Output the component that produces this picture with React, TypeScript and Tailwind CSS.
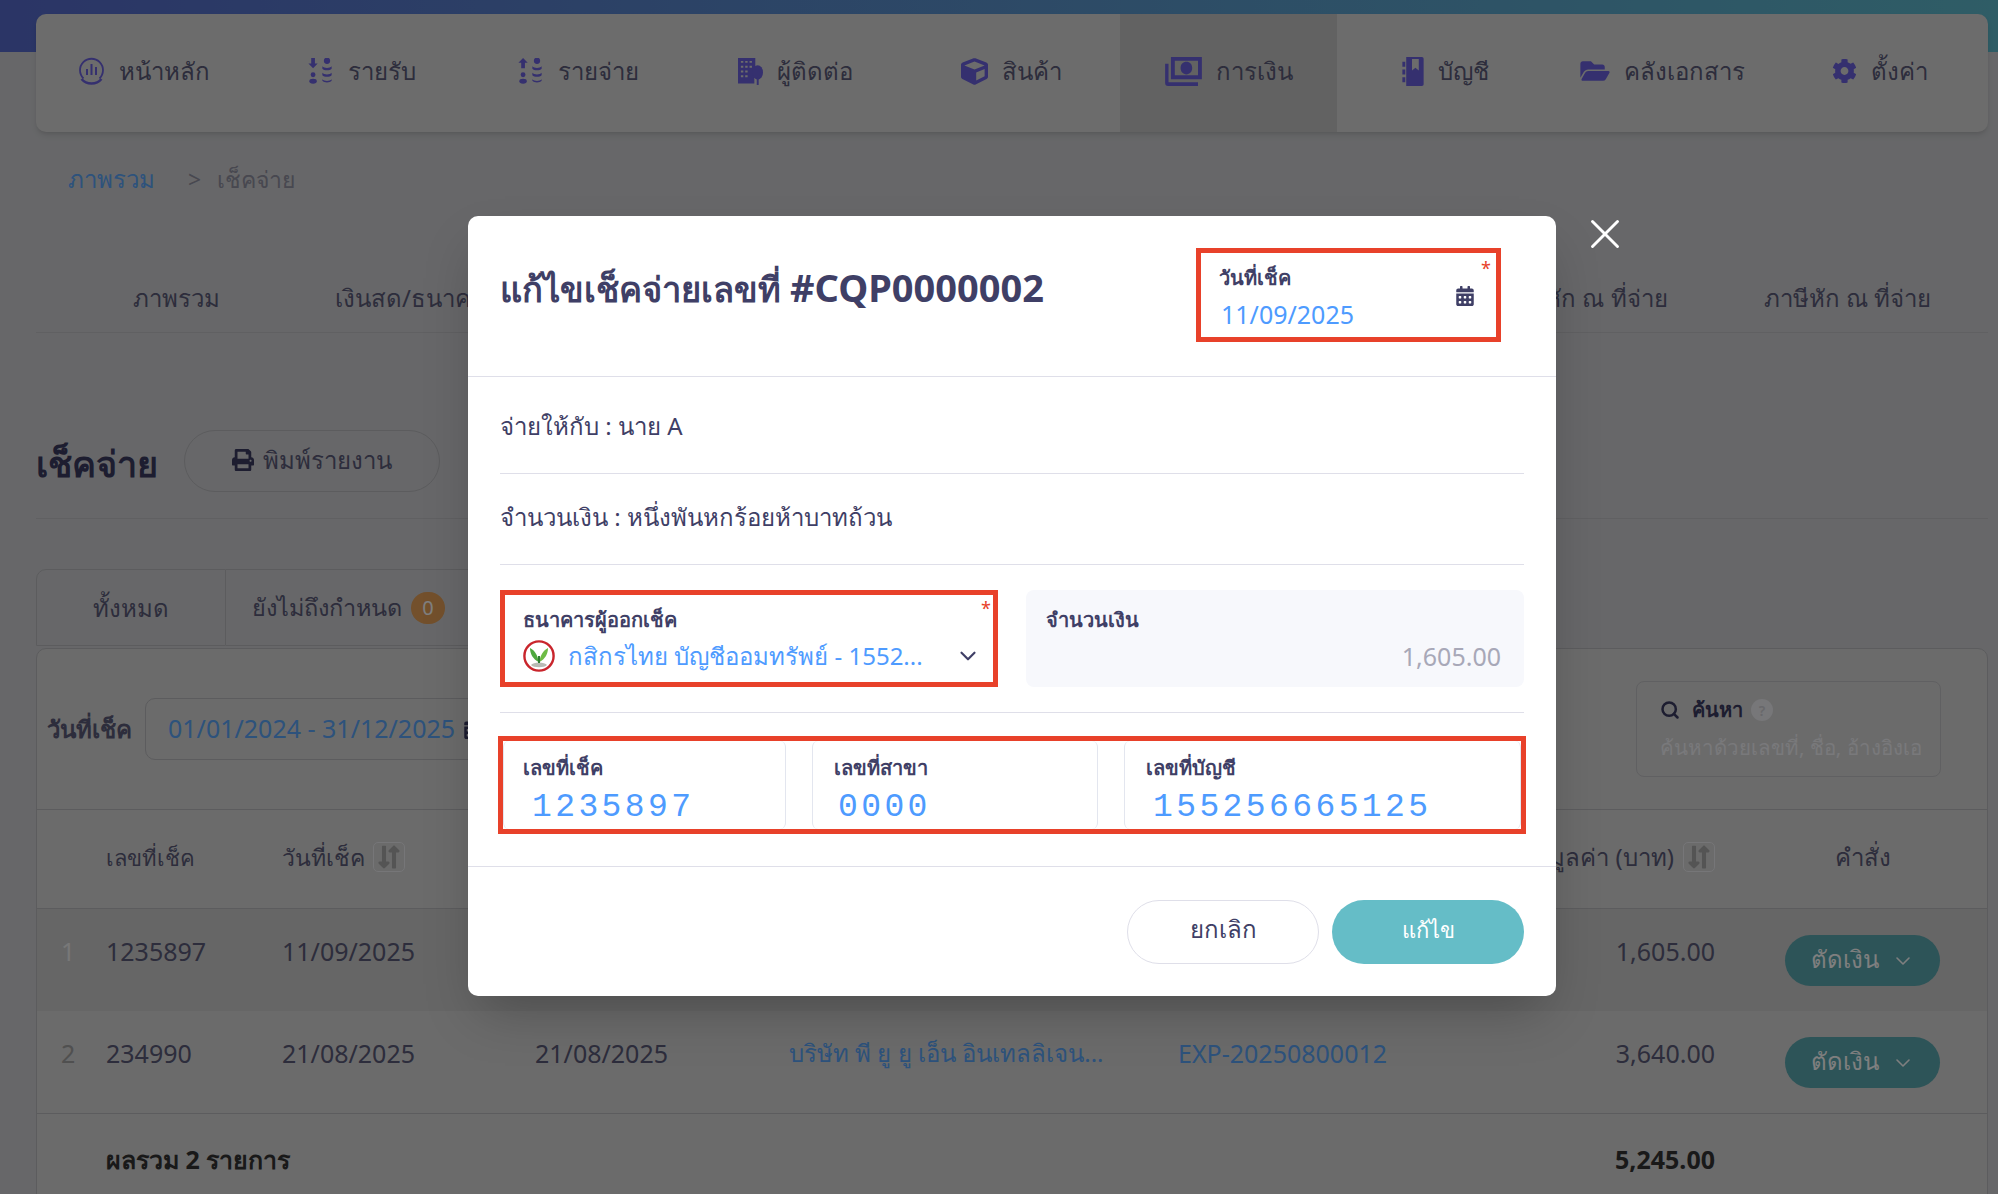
import { ChevronDown, Search, X } from 'lucide-react';
import { FaCalendarAlt, FaCog, FaCube, FaFolderOpen, FaLongArrowAltDown, FaLongArrowAltUp, FaPrint } from 'react-icons/fa';

function HomeIcon() {
  return (
    <svg viewBox="0 0 26 28" className="h-[28px] w-[27px]" fill="none" stroke="currentColor">
      <path d="M5 21.5A11.5 11.5 0 1 1 21 21.5" strokeWidth="1.8" />
      <path d="M3 22c5 6 15 6 20 0" strokeWidth="2.4" />
      <path d="M8.5 12v6M13 7v11M17.5 10v8" strokeWidth="2" />
    </svg>
  );
}

function CoinsIcon({ up }: { up?: boolean }) {
  return (
    <svg viewBox="0 0 28 28" className="h-[26px] w-[27px]" fill="currentColor">
      <path d={up ? 'M6 0l5 5H8v6H4V5H1z' : 'M6 11L1 6h3V0h4v6h3z'} />
      <circle cx="6" cy="18" r="2.6" />
      <ellipse cx="6" cy="25" rx="4" ry="2.6" />
      <circle cx="21" cy="3" r="3.4" />
      <path d="M16 9c2 2.4 8 2.4 10 0v2.500c-2 2.400-8 2.400-10 0zM16 16c2 2.400 8 2.400 10 0v2.500c-2 2.400-8 2.400-10 0zM16 23c2 2.400 8 2.400 10 0v1.500c-2 2.400-8 2.400-10 0z" />
    </svg>
  );
}

function ContactIcon() {
  return (
    <svg viewBox="0 0 26 28" className="h-[27px] w-[25px]" fill="currentColor">
      <path fillRule="evenodd" d="M0 0h18v10.500c-2 2-2.500 5-1 8v8H0zM3 3v2h2.500V3zm4.500 0v2H10V3zM12 3v2h2.500V3zM3 8v2h2.500V8zm4.500 0v2H10V8zM12 8v2h2.500V8zM3 13v2h2.500v-2zm4.500 0v2H10v-2zM3 18v2h2.500v-2zm4.500 0v2H10v-2z" />
      <ellipse cx="20.500" cy="15" rx="5.500" ry="7.500" />
      <rect x="19.500" y="20" width="2" height="8" />
    </svg>
  );
}

function MoneyIcon() {
  return (
    <svg viewBox="0 0 38 30" className="h-[29px] w-[37px]" fill="currentColor">
      <path fillRule="evenodd" d="M6 0h32v23H6zM10 4v15h24V4zM16 11.500c0-4 2.500-6.500 6-6.500s6 2.500 6 6.500-2.500 6.500-6 6.500-6-2.500-6-6.500z" />
      <path d="M0 7h3.500v19H34v4H3c-2 0-3-1-3-3z" />
    </svg>
  );
}

function BookIcon() {
  return (
    <svg viewBox="0 0 22 30" className="h-[29px] w-[22px]" fill="currentColor">
      <path fillRule="evenodd" d="M4 0h16c1.500 0 2 .8 2 2v26c0 1.200-.5 2-2 2H4zM10 2v12l3.500-3 3.500 3V2z" />
      <path d="M0 5h3v5H0zM0 13h3v5H0zM0 21h3v5H0z" />
    </svg>
  );
}

function KBankLogo() {
  return (
    <svg viewBox="0 0 32 32" className="h-[32px] w-[32px] shrink-0">
      <circle cx="16" cy="16" r="14.600" fill="#fff" stroke="#c9252c" strokeWidth="2.400" />
      <path d="M8 25c2-3.500 14-3.500 16 0-2 3-14 3-16 0z" fill="#b9bbb5" />
      <path d="M15.500 22C15 16 12.500 11 7 8c0 6 3 11 8.500 14z" fill="#4ea83f" />
      <path d="M16.500 22C17 16 19.500 11 25 8c0 6-3 11-8.500 14z" fill="#6dbb45" />
      <path d="M15 16h2v7h-2z" fill="#2e7d32" />
    </svg>
  );
}

function SortIcon() {
  return (
    <span className="flex h-[30px] w-[32px] items-center justify-center rounded-[5px] border border-[#ececf0] text-[#a8a8a8]">
      <FaLongArrowAltDown className="-mr-[4px] h-[26px] w-[14px]" />
      <FaLongArrowAltUp className="h-[26px] w-[14px]" />
    </span>
  );
}

const navItems = [
  { label: 'หน้าหลัก', icon: <HomeIcon /> },
  { label: 'รายรับ', icon: <CoinsIcon /> },
  { label: 'รายจ่าย', icon: <CoinsIcon up /> },
  { label: 'ผู้ติดต่อ', icon: <ContactIcon /> },
  { label: 'สินค้า', icon: <FaCube className="h-[27px] w-[27px]" /> },
  { label: 'การเงิน', icon: <MoneyIcon />, active: true },
  { label: 'บัญชี', icon: <BookIcon /> },
  { label: 'คลังเอกสาร', icon: <FaFolderOpen className="h-[26px] w-[30px]" /> },
  { label: 'ตั้งค่า', icon: <FaCog className="h-[26px] w-[25px]" /> },
];

const rowGrid = 'grid grid-cols-[69px_176px_253px_254px_389px_322px_238px_1fr]';

const rows = [
  { no: '1', noColor: 'text-[#f0f0f0]', cheque: '1235897', date: '11/09/2025', paid: '', name: '', doc: '', amount: '1,605.00', bg: 'bg-[#cccccc]' },
  { no: '2', noColor: 'text-[#a0a0a0]', cheque: '234990', date: '21/08/2025', paid: '21/08/2025', name: 'บริษัท พี ยู ยู เอ็น อินเทลลิเจน...', doc: 'EXP-20250800012', amount: '3,640.00', bg: 'bg-[#d6d6d6]' },
];

const numberFields = [
  { label: 'เลขที่เช็ค', value: '1235897', width: 'w-[283px]', pad: 'pl-[19px]', valuePad: 'pl-[9px]' },
  { label: 'เลขที่สาขา', value: '0000', width: 'w-[286px]', pad: 'pl-[21px]', valuePad: 'pl-[4px]' },
  { label: 'เลขที่บัญชี', value: '155256665125', width: 'flex-1', pad: 'pl-[21px]', valuePad: 'pl-[7px]' },
];

export default function App() {
  return (
    <div className="relative h-[1194px] overflow-hidden bg-[#cecfd2] font-['Noto_Sans',sans-serif] text-[24px] text-[#5a5a78]">
      <div className="h-[52px] bg-gradient-to-r from-[#566acc] to-[#5ebacc]" />

      <div className="-mt-[38px] pl-[36px] pr-[10px]">
        <nav className="grid h-[118px] grid-cols-9 overflow-hidden rounded-[10px] bg-[#d8d8d8] shadow-md">
          {navItems.map((item) => (
            <div key={item.label} className={`flex items-center justify-center gap-[14px] pb-[4px] ${item.active ? 'bg-[#c4c4c4]' : ''}`}>
              <span className="text-[#6a60de]">{item.icon}</span>
              <span>{item.label}</span>
            </div>
          ))}
        </nav>

        <div className="mt-[31px] flex h-[32px] items-center pl-[32px] text-[23px]">
          <span className="text-[24px] text-[#5aa5f8]">ภาพรวม</span>
          <span className="ml-[33px] text-[#9090a0]">&gt;</span>
          <span className="ml-[16px] text-[#9090a0]">เช็คจ่าย</span>
        </div>

        <div className="mt-[71px] flex h-[67px] items-center border-b border-[#c0c0c4] pb-[3px]">
          <span className="ml-[97px]">ภาพรวม</span>
          <span className="ml-[115px]">เงินสด/ธนาคาร</span>
          <span className="ml-auto">ใบหัก ณ ที่จ่าย</span>
          <span className="ml-[96px] mr-[57px]">ภาษีหัก ณ ที่จ่าย</span>
        </div>

        <div className="flex h-[186px] items-start border-b border-[#c0c0c4] pt-[97px]">
          <h1 className="text-[36px] font-bold leading-[68px] text-[#3a3a60]">เช็คจ่าย</h1>
          <button className="ml-[26px] flex h-[62px] w-[256px] items-center justify-center gap-[9px] rounded-full border border-[#b8b8bc] pb-[2px]">
            <FaPrint className="h-[22px] w-[22px] text-[#3a3a60]" />
            พิมพ์รายงาน
          </button>
        </div>

        <div className="mt-[50px] flex h-[79px] pb-[2px]">
          <div className="flex w-[190px] items-center justify-center rounded-tl-[10px] border border-[#b8b8bc]">ทั้งหมด</div>
          <div className="flex w-[280px] items-center gap-[9px] border-y border-r border-[#b8b8bc] pl-[26px] text-[23.5px]">
            ยังไม่ถึงกำหนด
            <span className="flex h-[32px] w-[34px] items-center justify-center rounded-full bg-[#e6a058] text-[20px] text-[#fff]">0</span>
          </div>
        </div>

        <section className="rounded-t-[10px] border border-[#b8b8bc] bg-[#d6d6d6]">
          <div className="flex h-[161px] items-center border-b border-[#b8b8bc] pl-[10px] pr-[46px]">
            <span className="font-semibold">วันที่เช็ค</span>
            <div className="ml-[13px] flex h-[62px] w-[480px] items-center gap-[8px] rounded-[10px] border border-[#b8b8bc] pl-[22px] text-[25px] text-[#5aa5f8]">
              01/01/2024 - 31/12/2025
              <FaCalendarAlt className="h-[20px] w-[20px] text-[#3a3a60]" />
            </div>
            <div className="ml-auto h-[96px] w-[305px] rounded-[8px] border border-[#c0c0c4] pl-[23px] pt-[10px]">
              <div className="flex h-[36px] items-center text-[20px] font-semibold text-[#3a3a60]">
                <Search className="h-[20px] w-[20px]" strokeWidth={3} />
                <span className="ml-[12px]">ค้นหา</span>
                <span className="ml-[8px] flex h-[22px] w-[22px] items-center justify-center rounded-full bg-[#eeeef2] text-[14px] text-[#d0d0d6]">?</span>
              </div>
              <div className="mt-[4px] text-[20.5px] text-[#f2f2f6]">ค้นหาด้วยเลขที่, ชื่อ, อ้างอิงเอ</div>
            </div>
          </div>

          <div className={`${rowGrid} h-[99px] items-center border-b border-[#b8b8bc] pb-[4px]`}>
            <span />
            <span className="text-[22px]">เลขที่เช็ค</span>
            <span className="flex items-center gap-[8px] text-[23px]">วันที่เช็ค <SortIcon /></span>
            <span />
            <span />
            <span />
            <span className="flex items-center justify-end gap-[9px] pr-[23px]">มูลค่า (บาท) <SortIcon /></span>
            <span className="text-center">คำสั่ง</span>
          </div>

          {rows.map((row) => (
            <div key={row.no} className={`${rowGrid} h-[102px] items-start pt-[26px] text-[25px] leading-[32px] ${row.bg}`}>
              <span className={`pl-[24px] ${row.noColor}`}>{row.no}</span>
              <span>{row.cheque}</span>
              <span>{row.date}</span>
              <span>{row.paid}</span>
              <span className="text-[24px] text-[#5aa5f8]">{row.name}</span>
              <span className="text-[#5aa5f8]">{row.doc}</span>
              <span className="pr-[23px] text-right">{row.amount}</span>
              <button className="mx-auto flex h-[51px] w-[155px] items-center justify-center gap-[12px] rounded-full bg-[#5aa8b0] pb-[3px] text-[24px] text-white">
                ตัดเงิน
                <ChevronDown className="mt-[3px] h-[24px] w-[24px]" strokeWidth={1.6} />
              </button>
            </div>
          ))}

          <div className={`${rowGrid} h-[100px] items-start border-t border-[#b8b8bc] pt-[27px] text-[25px] font-bold text-[#333]`}>
            <span />
            <span className="col-span-5">ผลรวม 2 รายการ</span>
            <span className="pr-[23px] text-right">5,245.00</span>
          </div>
        </section>
      </div>

      {/* dimmed backdrop with the edit dialog */}
      <div className="absolute inset-0 flex justify-center bg-black/50 pt-[216px]">
        <div className="relative ml-[26px] h-[780px] w-[1088px] rounded-[10px] bg-white text-[#3f3f66] shadow-2xl">
          <button className="absolute -right-[74px] -top-[7px] text-white">
            <X className="h-[50px] w-[50px]" strokeWidth={1.4} />
          </button>

          <header className="flex h-[161px] border-b border-[#dfdfe9] pl-[32px]">
            <h2 className="pt-[43px] text-[34.5px] font-bold leading-[56px]">
              แก้ไขเช็คจ่ายเลขที่ <span className="text-[38px]">#CQP0000002</span>
            </h2>
            <div className="relative ml-auto mr-[55px] mt-[32px] h-[94px] w-[305px] border-[5px] border-[#e8412a] pl-[18px] pt-[9px]">
              <span className="absolute right-[5px] top-[2px] text-[18px] text-[#e8412a]">*</span>
              <div className="text-[20px] font-semibold leading-[32px]">วันที่เช็ค</div>
              <div className="mt-[4px] pl-[2px] text-[25px] leading-[32px] text-[#4e9bff]">11/09/2025</div>
              <FaCalendarAlt className="absolute right-[21px] top-[33px] h-[20px] w-[20px]" />
            </div>
          </header>

          <div className="px-[32px]">
            <div className="flex h-[97px] items-center border-b border-[#dfdfe9] pt-[1px]">จ่ายให้กับ : นาย A</div>
            <div className="flex h-[91px] items-center border-b border-[#dfdfe9] pb-[5px]">จำนวนเงิน : หนึ่งพันหกร้อยห้าบาทถ้วน</div>

            <div className="grid h-[148px] grid-cols-2 gap-[28px] border-b border-[#dfdfe9] pt-[25px]">
              <div className="relative h-[97px] border-[5px] border-[#e8412a] pl-[18px] pt-[9px]">
                <span className="absolute right-[2px] top-[0px] text-[18px] text-[#e8412a]">*</span>
                <div className="text-[20px] font-semibold leading-[32px]">ธนาคารผู้ออกเช็ค</div>
                <div className="mt-[2px] flex items-center gap-[13px] text-[#4e9bff]">
                  <KBankLogo />
                  <span className="w-[355px] truncate">กสิกรไทย บัญชีออมทรัพย์ - 1552...</span>
                  <ChevronDown className="ml-[19px] h-[26px] w-[26px] text-[#3f3f66]" />
                </div>
              </div>
              <div className="h-[97px] rounded-[8px] bg-[#f7f8fc] pl-[20px] pr-[23px] pt-[14px]">
                <div className="text-[20px] font-semibold leading-[32px]">จำนวนเงิน</div>
                <div className="mt-[2px] text-right text-[25px] text-[#a8a8b8]">1,605.00</div>
              </div>
            </div>

            <div className="-mx-[2px] mt-[23px] flex h-[98px] gap-[26px] border-[5px] border-[#e8412a]">
              {numberFields.map((field) => (
                <div key={field.label} className={`${field.width} ${field.pad} rounded-[6px] border-x border-[#e3e6ef] pt-[11px]`}>
                  <div className="text-[20px] font-semibold leading-[32px]">{field.label}</div>
                  <div className={`${field.valuePad} mt-[5px] font-['Liberation_Mono',monospace] text-[33px] leading-[38px] tracking-[3.4px] text-[#4e9bff]`}>{field.value}</div>
                </div>
              ))}
            </div>
          </div>

          <footer className="mt-[32px] flex h-[129px] justify-end gap-[13px] border-t border-[#dfdfe9] pr-[32px] pt-[33px]">
            <button className="h-[64px] w-[192px] rounded-full border border-[#dfdfe9] pb-[6px]">ยกเลิก</button>
            <button className="h-[64px] w-[192px] rounded-full bg-[#65bdc7] pb-[6px] text-[22px] text-white">แก้ไข</button>
          </footer>
        </div>
      </div>
    </div>
  );
}
